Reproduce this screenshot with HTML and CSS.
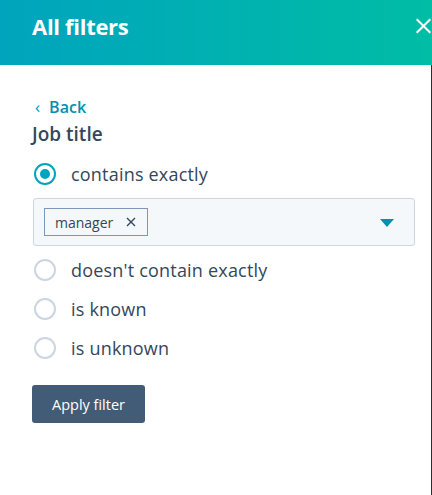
FILE: index.html
```html
<!DOCTYPE html>
<html>
<head>
<meta charset="utf-8">
<link rel="stylesheet" href="styles.css">
</head>
<body>
<div class="panel">
  <header class="header">
    <h1 class="title">All filters</h1>
    <span class="close">
      <svg width="20" height="20" viewBox="0 0 20 20"><path d="M2 2L18 18M18 2L2 18" stroke="#fff" stroke-width="2.4" fill="none"/></svg>
    </span>
  </header>
  <main class="body">
    <a class="back"><span class="chev">‹</span>Back</a>
    <div class="label">Job title</div>
    <div class="option checked"><span class="radio"></span><span>contains exactly</span></div>
    <div class="select">
      <span class="tag">manager<svg class="tag-x" width="10" height="10" viewBox="0 0 10 10"><path d="M1 1L9 9M9 1L1 9" stroke="#33475b" stroke-width="1.4"/></svg></span>
      <svg class="caret" width="14" height="8" viewBox="0 0 14 8"><path d="M0 0H14L7 8Z" fill="#0091ae"/></svg>
    </div>
    <div class="option"><span class="radio"></span><span>doesn't contain exactly</span></div>
    <div class="option"><span class="radio"></span><span>is known</span></div>
    <div class="option"><span class="radio"></span><span>is unknown</span></div>
    <button class="apply">Apply filter</button>
  </main>
</div>
</body>
</html>
```
FILE: styles.css
```css
html, body { margin: 0; padding: 0; background: #fff; }
body { font-family: "Open Sans", Lato, sans-serif; color: #33475b; width: 432px; height: 495px; overflow: hidden; }
.panel { width: 432px; height: 495px; display: flex; flex-direction: column; }
.header {
  height: 65px; flex: none;
  background: linear-gradient(90deg, #00a4bd 0%, #00bda5 100%);
  display: flex; align-items: center; justify-content: space-between;
  padding-left: 32px; box-sizing: border-box;
}
.title { margin: 0; color: #fff; font-size: 22px; font-weight: 700; line-height: 1; margin-top: -14px; letter-spacing: -0.3px; }
.close { width: 17px; overflow: hidden; display: flex; margin-top: -14px; }
.body {
  flex: 1; border-right: 1px solid #2d2d2d;
  padding: 31px 16px 0 32px;
  display: flex; flex-direction: column;
}
.back { color: #0091ae; font-size: 16px; font-weight: 600; line-height: 22px; margin-left: 3px; }
.chev { font-size: 17px; margin-right: 9px; font-weight: 400; }
.label { font-size: 19px; font-weight: 600; line-height: 24px; margin-top: 4px; }
.option { display: flex; align-items: center; gap: 15px; font-size: 18px; letter-spacing: 0.2px; height: 39px; padding-left: 2px; }
.option.checked { margin-top: 8px; height: 40px; }
.radio {
  width: 22px; height: 22px; box-sizing: border-box; border-radius: 50%;
  border: 2px solid #cbd6e2; background: #fff; position: relative; flex: none;
}
.checked .radio { border-color: #00a4bd; }
.checked .radio::after {
  content: ""; position: absolute; left: 4px; top: 4px; width: 10px; height: 10px; border-radius: 50%; background: #00a4bd;
}
.select {
  margin: 4px 0 4px 1px; width: 382px; height: 48px; box-sizing: border-box;
  background: #f5f8fa; border: 1px solid #cbd6e2; border-radius: 3px;
  display: flex; align-items: center; justify-content: space-between;
  padding: 0 20px 0 10px;
}
.tag {
  display: flex; align-items: center; gap: 13px;
  height: 28px; box-sizing: border-box; padding: 0 11px 0 10px;
  border: 1px solid #7c98b6; background: #f5f8fa; font-size: 14px; font-weight: 500;
}
.caret { margin-top: 2px; }
.apply {
  margin-top: 18px; align-self: flex-start;
  width: 113px; height: 38px; border: none; border-radius: 3px;
  background: #425b76; color: #fff; font-family: "Open Sans", sans-serif; font-size: 14.5px; font-weight: 500;
}
```
